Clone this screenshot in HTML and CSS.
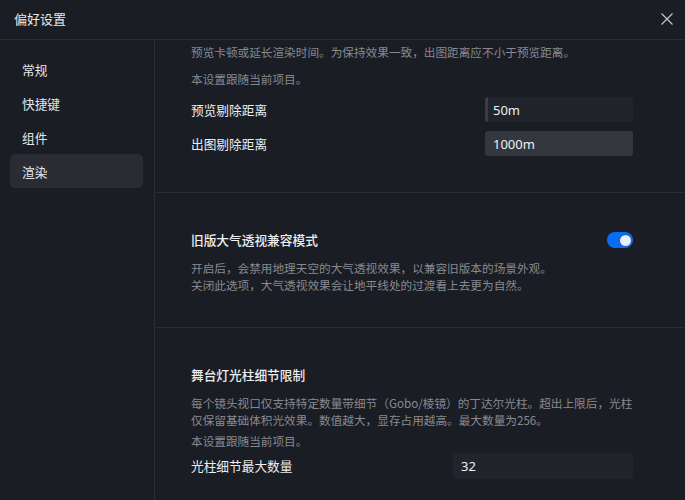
FILE: index.html
```html
<!DOCTYPE html>
<html lang="zh-CN">
<head>
<meta charset="utf-8">
<title>偏好设置</title>
<link rel="stylesheet" href="styles.css">
</head>
<body>
<div class="dialog">
  <header class="header">
    <div class="title">偏好设置</div>
    <button class="close" aria-label="关闭">
      <svg width="12" height="12" viewBox="0 0 12 12"><path d="M0.5 0.5 L11.5 11.5 M11.5 0.5 L0.5 11.5" stroke="#c4c5c9" stroke-width="1.2" fill="none"/></svg>
    </button>
  </header>
  <div class="main">
    <nav class="sidebar">
      <div class="nav-item">常规</div>
      <div class="nav-item">快捷键</div>
      <div class="nav-item">组件</div>
      <div class="nav-item active">渲染</div>
    </nav>
    <div class="content">
      <section class="section first">
        <p class="desc">预览卡顿或延长渲染时间。为保持效果一致，出图距离应不小于预览距离。</p>
        <p class="desc note">本设置跟随当前项目。</p>
        <div class="rows">
          <div class="row">
            <span class="label">预览剔除距离</span>
            <div class="input focused">50m</div>
          </div>
          <div class="row">
            <span class="label">出图剔除距离</span>
            <div class="input hover">1000m</div>
          </div>
        </div>
      </section>
      <section class="section second">
        <div class="title-row">
          <span class="label strong">旧版大气透视兼容模式</span>
          <span class="toggle"><span class="knob"></span></span>
        </div>
        <p class="desc after-title">开启后，会禁用地理天空的大气透视效果，以兼容旧版本的场景外观。<br>关闭此选项，大气透视效果会让地平线处的过渡看上去更为自然。</p>
      </section>
      <section class="section third">
        <div class="title-row">
          <span class="label strong">舞台灯光柱细节限制</span>
        </div>
        <p class="desc after-title">每个镜头视口仅支持特定数量带细节（Gobo/棱镜）的丁达尔光柱。超出上限后，光柱<br>仅保留基础体积光效果。数值越大，显存占用越高。最大数量为256。</p>
        <p class="desc note-small">本设置跟随当前项目。</p>
        <div class="row wide">
          <span class="label">光柱细节最大数量</span>
          <div class="input wide-input">32</div>
        </div>
      </section>
    </div>
  </div>
</div>
</body>
</html>
```

FILE: styles.css
```css
* { box-sizing: border-box; }
html, body {
  margin: 0;
  padding: 0;
  background: #1b1d24;
}
body {
  width: 685px;
  height: 500px;
  overflow: hidden;
  font-family: "Noto Sans CJK SC", "Noto Sans", sans-serif;
  color: #e4e5e8;
}
.dialog {
  width: 685px;
  height: 500px;
  display: flex;
  flex-direction: column;
  background: #1b1d24;
}
.header {
  height: 40px;
  flex: none;
  display: flex;
  align-items: center;
  justify-content: space-between;
  border-bottom: 1px solid #2b2d34;
  padding: 0 12px 1px 14px;
}
.title {
  font-size: 13px;
  line-height: 18px;
  color: #e8e9ec;
}
.close {
  background: none;
  border: 0;
  padding: 0;
  width: 12px;
  height: 12px;
  display: flex;
  cursor: pointer;
}
.main {
  flex: 1;
  display: flex;
  min-height: 0;
}
.sidebar {
  width: 155px;
  flex: none;
  border-right: 1px solid #2b2d34;
  padding: 12px 11px 0 10px;
  display: flex;
  flex-direction: column;
}
.nav-item {
  height: 34px;
  display: flex;
  align-items: center;
  padding-left: 12px;
  font-size: 12.7px;
  color: #e4e5e8;
  border-radius: 5px;
}
.nav-item.active {
  background: #2a2c33;
}
.content {
  flex: 1;
  overflow: hidden;
  display: flex;
  flex-direction: column;
}
.section {
  padding: 0 52px 0 36px;
  border-bottom: 1px solid #2b2d34;
}
.section.first {
  padding-top: 2.5px;
  padding-bottom: 36px;
}
.section.second {
  padding-top: 38px;
  padding-bottom: 34.5px;
}
.section.third {
  padding-top: 38px;
  border-bottom: 0;
}
p { margin: 0; }
.desc {
  font-size: 11.65px;
  line-height: 17px;
  color: #888a90;
  white-space: nowrap;
}
.desc.note { margin-top: 10px; }
.desc.after-title { margin-top: 9.5px; }
.desc.note-small { margin-top: 4px; }
.rows {
  margin-top: 10.5px;
  display: flex;
  flex-direction: column;
  gap: 9px;
}
.row {
  display: flex;
  align-items: center;
  justify-content: space-between;
  height: 25px;
}
.row.wide {
  margin-top: 4.5px;
  height: 26px;
}
.label {
  font-size: 12.7px;
  line-height: 18px;
  color: #eceef1;
}
.label.strong {
  font-weight: 500;
}
.title-row {
  display: flex;
  align-items: center;
  justify-content: space-between;
  height: 18px;
}
.input {
  width: 148px;
  height: 25px;
  border-radius: 3px;
  background: #22242b;
  font-size: 13px;
  color: #eef0f3;
  display: flex;
  align-items: center;
  padding-left: 8px;
  font-family: "Noto Sans", "Noto Sans CJK SC", sans-serif;
}
.input.focused {
  border-left: 3px solid #3b3d45;
  padding-left: 5px;
}
.input.hover {
  background: #35373e;
}
.input.wide-input {
  width: 180px;
  height: 26px;
}
.toggle {
  width: 26px;
  height: 16px;
  border-radius: 8px;
  background: #0b6df6;
  display: flex;
  align-items: center;
  justify-content: flex-end;
  padding-right: 2px;
  margin-top: 0.5px;
}
.knob {
  width: 11px;
  height: 11px;
  border-radius: 50%;
  background: #e7eefc;
  box-shadow: 0 0 0 0.5px #1a4fa8;
}
```
